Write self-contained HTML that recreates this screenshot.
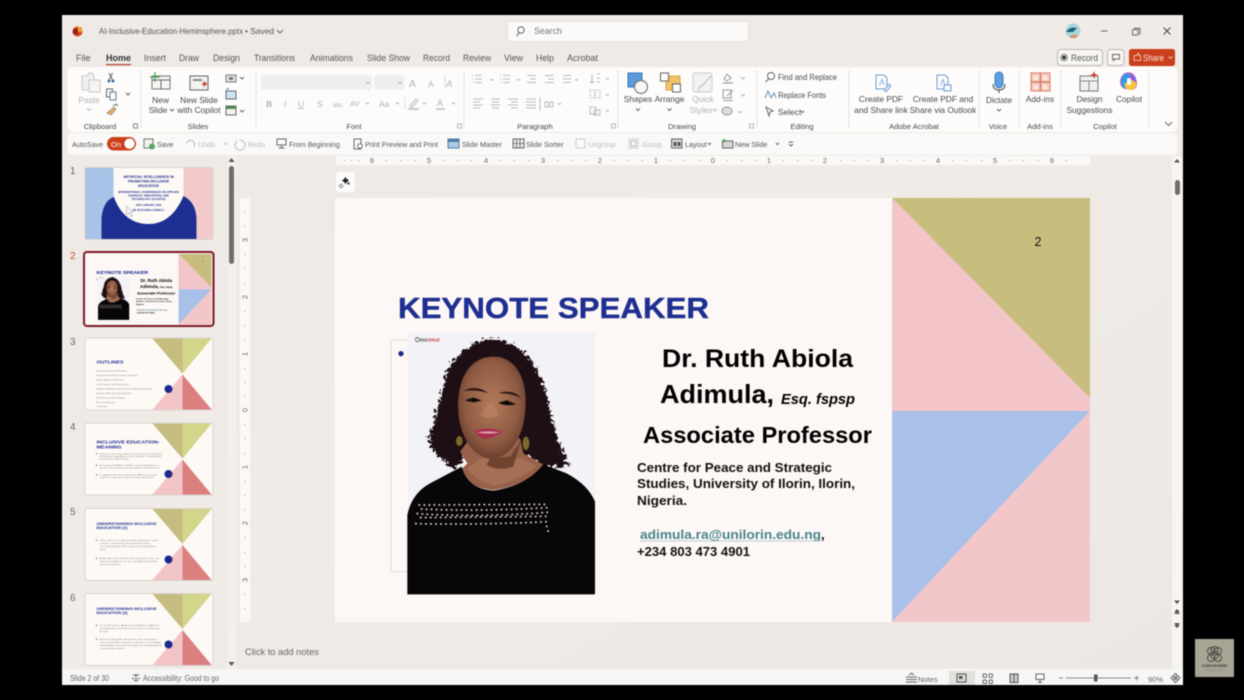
<!DOCTYPE html>
<html lang="en"><head><meta charset="utf-8"><title>PowerPoint</title>
<style>
html,body{margin:0;padding:0;background:#000;width:1244px;height:700px;overflow:hidden}
svg.page{display:block;filter:blur(.45px)}
text{font-family:"Liberation Sans",sans-serif;font-size:8.4px;fill:#4a4a4a;white-space:pre}
.c{text-anchor:middle}
.g{fill:#b3b1ae}
.t{font-size:9px;fill:#555}
.q{font-size:7.2px;fill:#555}
.ql{font-size:7.2px;fill:#bbb}
.ic{fill:none;stroke:#666;stroke-width:1}
.lic{fill:none;stroke:#bcbab7;stroke-width:1}
.sep{stroke:#e4e2df;stroke-width:1}
.b{font-weight:700;fill:#000}
.tb{fill:#777;font-size:2.2px}
</style></head><body>
<svg class="page" width="1244" height="700" viewBox="0 0 1244 700" xmlns="http://www.w3.org/2000/svg">
<defs>
<linearGradient id="bg" x1="0" x2="1" y1="0" y2="1"><stop offset="0" stop-color="#eeeae5"/><stop offset=".5" stop-color="#f1ebe7"/><stop offset="1" stop-color="#ebe8e3"/></linearGradient>
<radialGradient id="skin" cx=".5" cy=".45" r=".62"><stop offset="0" stop-color="#b27a5c"/><stop offset=".65" stop-color="#8e5a42"/><stop offset="1" stop-color="#593226"/></radialGradient>
<filter id="curl" x="-10%" y="-10%" width="120%" height="120%" color-interpolation-filters="sRGB"><feTurbulence type="turbulence" baseFrequency=".07" numOctaves="2" seed="4"/><feDisplacementMap in="SourceGraphic" scale="30" xChannelSelector="R" yChannelSelector="G"/></filter>
<g id="tri">
<rect width="127" height="71" fill="#fdf9f5"/>
<polygon points="67,0 97,0 97,35" fill="#c5bd80"/><polygon points="97,0 126,0 97,35" fill="#d3d58b"/>
<polygon points="67,71 97,71 97,36" fill="#f3c4c6"/><polygon points="97,71 126,71 97,36" fill="#dc7f7f"/>
<circle cx="83" cy="50.500" r="4" fill="#1c2a8c"/>
<rect x="-.5" y="-.5" width="128" height="72" rx="2" fill="none" stroke="#d8d4cf"/>
</g>
<g id="photo" transform="translate(380 325) scale(.33333)">
<rect x="33" y="45" width="60" height="695" fill="none" stroke="#d4d3cf" stroke-width="2"/>
<rect x="82" y="22" width="563" height="786" fill="#f3f2f6"/>
<circle cx="63" cy="86" r="8" fill="#1c2a8c"/>
<circle cx="112" cy="44" r="6" fill="none" stroke="#555" stroke-width="2.500"/>
<text x="120" y="50" textLength="24" lengthAdjust="spacingAndGlyphs" style="font-size:15px;font-weight:700;fill:#444">DIGI</text><text x="146" y="50" textLength="34" lengthAdjust="spacingAndGlyphs" style="font-size:15px;font-weight:700;fill:#c8444c">BRUE</text>
<path filter="url(#curl)" d="M140,335 C155,280 170,220 195,130 C225,70 270,38 325,35 C395,38 450,85 480,160 C505,235 510,300 540,370 L562,412 L490,425 L430,380 L260,380 L215,425 L185,400 C165,385 145,365 140,335Z" fill="#1d0f14"/>
<path d="M240,380 L262,415 L245,432 Q262,490 340,495 Q440,482 492,420 L430,385 L420,340 L270,340Z" fill="#97604a"/>
<path d="M262,430 Q290,470 345,482 Q410,470 470,425 L430,400 L300,400Z" fill="#a56f56"/>
<path d="M330,400 L390,395 L425,345 L415,375 L400,425 Q350,440 320,420Z" fill="#70432f"/>
<path d="M235,265 C228,165 268,95 340,95 C412,95 446,170 435,265 C428,340 388,398 335,402 C282,398 242,340 235,265Z" fill="url(#skin)"/>
<path d="M250,198 Q290,178 325,205 Q290,192 250,198Z M355,205 Q395,190 425,220 Q392,203 355,205Z" fill="#2a1512"/>
<path d="M255,226 Q280,212 305,227 Q280,236 255,226Z M355,234 Q380,220 408,238 Q380,245 355,234Z" fill="#17100f"/>
<circle cx="280" cy="225" r="7" fill="#0c0807"/><circle cx="380" cy="233" r="7" fill="#0c0807"/>
<path d="M300,268 Q325,290 355,272 Q350,252 335,232 Q318,240 300,268Z" fill="#bf8666" opacity=".6"/>
<path d="M283,318 Q320,302 368,320 Q330,348 300,338Z" fill="#a92f4f"/><path d="M290,322 Q325,316 360,322 Q325,330 290,322Z" fill="#e2a0b0"/>
<ellipse cx="238" cy="348" rx="10" ry="15" fill="#7c6a2a"/><ellipse cx="438" cy="355" rx="10" ry="20" fill="#7c6a2a"/>
<path d="M82,808 L82,570 Q95,505 150,475 L245,425 Q262,492 340,497 Q440,482 490,418 L560,445 Q625,480 645,530 L645,808Z" fill="#080607"/>
<g fill="none" stroke="#d6d1c6" stroke-width="6" stroke-linecap="round" stroke-dasharray="0 15">
<path d="M118,540 L500,538"/><path d="M125,552 Q300,560 505,548"/><path d="M112,566 Q300,578 505,562"/><path d="M122,578 L498,574"/><path d="M108,596 Q300,600 505,590"/><path d="M500,604 L505,620"/>
</g>
</g>
<g id="slide">
<rect x="335" y="198" width="755" height="424" fill="#fdf8f5"/>
<polygon points="892,198 1090,198 1090,398" fill="#c7bd7d"/>
<polygon points="892,198 1090,398 1090,411 892,411" fill="#f3c5c8"/>
<polygon points="892,411 1090,411 892,622" fill="#a9c0e8"/>
<polygon points="1090,411 1090,622 892,622" fill="#f3c6c9"/>
<use href="#photo"/>
<text x="398" y="318" textLength="311" lengthAdjust="spacingAndGlyphs" style="font-size:29px;font-weight:700;fill:#1e2f91;stroke:#1e2f91;stroke-width:.4">KEYNOTE SPEAKER</text>
<text class="b" x="662" y="367" textLength="191" lengthAdjust="spacingAndGlyphs" style="font-size:25px">Dr. Ruth Abiola</text>
<text class="b" x="660" y="403" textLength="114" lengthAdjust="spacingAndGlyphs" style="font-size:26px">Adimula,</text>
<text class="b" x="781" y="404" textLength="74" lengthAdjust="spacingAndGlyphs" style="font-size:14.500px;font-style:italic">Esq. fspsp</text>
<text class="b" x="643" y="443" textLength="229" lengthAdjust="spacingAndGlyphs" style="font-size:23.500px">Associate Professor</text>
<text class="b" x="637" y="472" textLength="195" lengthAdjust="spacingAndGlyphs" style="font-size:13px;fill:#111">Centre for Peace and Strategic</text>
<text class="b" x="637" y="488" textLength="218" lengthAdjust="spacingAndGlyphs" style="font-size:13px;fill:#111">Studies, University of Ilorin, Ilorin,</text>
<text class="b" x="637" y="505" textLength="50" lengthAdjust="spacingAndGlyphs" style="font-size:13px;fill:#111">Nigeria.</text>
<text x="640" y="539" textLength="181" lengthAdjust="spacingAndGlyphs" style="font-size:13px;font-weight:700;fill:#4a8490">adimula.ra@unilorin.edu.ng</text>
<text class="b" x="821" y="539" style="font-size:13px">,</text>
<line x1="640" x2="821" y1="541" y2="541" stroke="#a3c0c6" stroke-width=".7"/>
<text class="b" x="637" y="556" textLength="113" lengthAdjust="spacingAndGlyphs" style="font-size:13px;fill:#111">+234 803 473 4901</text>
<text x="1034.500" y="246" style="font-size:12.500px;fill:#111">2</text>
</g>
</defs>

<rect x="62" y="15" width="1121" height="670" fill="url(#bg)"/>

<!-- title bar -->
<circle cx="77.500" cy="31.500" r="5" fill="#d8401f"/><rect x="73" y="29" width="5" height="5" fill="#8f1f10"/><rect x="78" y="27" width="4" height="5" fill="#f2a13b"/>
<text x="99" y="34" textLength="144" lengthAdjust="spacingAndGlyphs" style="font-size:8.300px;fill:#555">AI-Inclusive-Education-Heminsphere.pptx</text>
<text x="245" y="34" textLength="29" lengthAdjust="spacingAndGlyphs" style="font-size:8.300px;fill:#555">• Saved</text>
<path d="M277,30 l3,3 l3,-3" class="ic"/>
<rect x="507.500" y="21.500" width="241" height="20" rx="3" fill="#fbfaf8" stroke="#e3e1dd"/>
<circle cx="521" cy="30" r="3.200" class="ic"/><path d="M519,33 l-2.500,3" class="ic"/>
<text x="534" y="34" style="font-size:8.800px;fill:#777">Search</text>
<circle cx="1073" cy="31" r="7.500" fill="#a9d6dc"/><path d="M1066,32 Q1070,26 1077,28 L1073,32Z" fill="#1e5f75"/><path d="M1071,35 h7 l-2,3 h-6z" fill="#e09069"/>
<path d="M1101,31 h6.500" stroke="#666" stroke-width="1"/>
<rect x="1132.500" y="29.500" width="5.500" height="5.500" rx="1" class="ic"/><path d="M1134.500,29 v-.8 h5.500 v5.500 h-1" class="ic"/>
<path d="M1163.500,27.500 l7,7 m0,-7 l-7,7" class="ic" style="stroke:#444"/>

<!-- tabs -->
<g class="tabs">
<text class="t" x="76" y="61">File</text>
<text class="t" x="106" y="61" style="font-weight:700;fill:#333" textLength="25" lengthAdjust="spacingAndGlyphs">Home</text>
<rect x="106" y="64" width="25" height="1.300" fill="#b84a32"/>
<text class="t" x="144" y="61" textLength="22" lengthAdjust="spacingAndGlyphs">Insert</text>
<text class="t" x="179" y="61" textLength="20" lengthAdjust="spacingAndGlyphs">Draw</text>
<text class="t" x="213" y="61" textLength="27" lengthAdjust="spacingAndGlyphs">Design</text>
<text class="t" x="254" y="61" textLength="41" lengthAdjust="spacingAndGlyphs">Transitions</text>
<text class="t" x="310" y="61" textLength="43" lengthAdjust="spacingAndGlyphs">Animations</text>
<text class="t" x="367" y="61" textLength="43" lengthAdjust="spacingAndGlyphs">Slide Show</text>
<text class="t" x="423" y="61" textLength="27" lengthAdjust="spacingAndGlyphs">Record</text>
<text class="t" x="463" y="61" textLength="28" lengthAdjust="spacingAndGlyphs">Review</text>
<text class="t" x="504" y="61" textLength="19" lengthAdjust="spacingAndGlyphs">View</text>
<text class="t" x="536" y="61" textLength="18" lengthAdjust="spacingAndGlyphs">Help</text>
<text class="t" x="567" y="61" textLength="31" lengthAdjust="spacingAndGlyphs">Acrobat</text>
</g>
<rect x="1057.500" y="49.500" width="45" height="16" rx="3" fill="#f7f6f3" stroke="#b9b7b3"/>
<circle cx="1064" cy="57.500" r="3.300" fill="none" stroke="#555" stroke-width=".7"/><circle cx="1064" cy="57.500" r="2" fill="#333"/>
<text x="1071" y="61" textLength="27" lengthAdjust="spacingAndGlyphs" style="font-size:9px;fill:#555">Record</text>
<rect x="1107.500" y="49.500" width="16.500" height="16" rx="3" fill="#f7f6f3" stroke="#b9b7b3"/>
<path d="M1112.500,54.500 h7 v4.500 h-4.500 l-1.500,1.500 v-1.500 h-1z" class="ic"/>
<rect x="1129" y="49" width="46" height="17" rx="2.500" fill="#ca3f1c"/>
<path d="M1134,55.500 h2.500 l2,-2.500 v2.500 h2 v5 h-6.500z" fill="none" stroke="#f6d8cc" stroke-width=".8"/>
<text x="1143" y="61" textLength="21" lengthAdjust="spacingAndGlyphs" style="font-size:9px;fill:#fbe6de">Share</text>
<path d="M1168.500,56.500 l2,2 l2,-2" fill="none" stroke="#fbe6de" stroke-width=".8"/>

<!-- ribbon -->
<rect x="67.500" y="67" width="1110" height="65" rx="5" fill="#fdfcfb"/>
<rect x="67.500" y="133" width="1110" height="22" rx="4" fill="#faf9f7"/>
<g class="sep"><line x1="141" x2="141" y1="70" y2="128"/><line x1="256" x2="256" y1="70" y2="128"/><line x1="464" x2="464" y1="70" y2="128"/><line x1="618" x2="618" y1="70" y2="128"/><line x1="757" x2="757" y1="70" y2="128"/><line x1="849" x2="849" y1="70" y2="128"/><line x1="979" x2="979" y1="70" y2="128"/><line x1="1019" x2="1019" y1="70" y2="128"/><line x1="1061" x2="1061" y1="70" y2="128"/><line x1="1149" x2="1149" y1="70" y2="128"/></g>

<!-- clipboard -->
<path d="M82,76 h5 l2,-3 h3 l2,3 v14 h-12z" fill="#f0efed" stroke="#c9c8c5"/><rect x="89" y="80" width="11" height="12" fill="#f6f5f3" stroke="#c9c8c5"/>
<text class="c g" x="89" y="103">Paste</text><path d="M87,108.500 l2,2 l2,-2" class="lic"/>
<path d="M109,73 l3.500,7 m0,-7 l-3.500,7" class="ic"/><circle cx="109" cy="81" r="1.500" fill="#3f6ea0"/><circle cx="113" cy="81" r="1.500" fill="#3f6ea0"/>
<rect x="106.500" y="89" width="6" height="8" class="ic"/><rect x="110" y="92" width="6" height="8" fill="#fdfcfb" stroke="#5a7fa6"/>
<path d="M126,93 l2,2 l2,-2" class="ic"/>
<path d="M107,113 l7,-6 l2,2 l-5,6z" fill="#e8b25d" stroke="#777" stroke-width=".6"/><path d="M113,106 l3,-2 l2,2" class="ic"/>
<text class="c" x="100" y="129" style="font-size:7.600px">Clipboard</text>
<rect x="133.500" y="124" width="4" height="4" class="lic" style="stroke:#888"/>

<!-- slides -->
<rect x="152" y="76" width="18" height="13" fill="#f6f5f3" stroke="#777"/><path d="M152,80 h18 M161,80 v9" class="ic"/><path d="M155,72 v10 M150,77 h10" stroke="#4aa04f" stroke-width="1.200"/>
<text class="c" x="160.500" y="103">New</text><text class="c" x="158" y="113">Slide</text><path d="M170,109 l2,2 l2,-2" class="ic"/>
<rect x="190" y="76" width="18" height="14" fill="#f3f2f0" stroke="#666"/><rect x="193" y="79" width="9" height="2" fill="#888"/><path d="M202,84 h5 m-2.500,-2.500 v5" stroke="#c7342a" stroke-width="1.500"/>
<text class="c" x="199" y="103">New Slide</text><text class="c" x="199" y="113">with Copilot</text>
<rect x="226" y="75" width="10" height="7" fill="#e5e4e2" stroke="#777"/><rect x="229" y="77" width="4" height="3" fill="#777"/><path d="M240,77 l2,2 l2,-2" class="ic"/>
<rect x="226" y="91" width="10" height="8" fill="#cfe0ef" stroke="#667"/><path d="M226,90 l3,-2" stroke="#3d82b8"/>
<rect x="226" y="106" width="10" height="9" fill="#f2f1ef" stroke="#666"/><rect x="226" y="106" width="10" height="3" fill="#4f8b4f"/><path d="M240,110 l2,2 l2,-2" class="ic"/>
<text class="c" x="198" y="129" style="font-size:7.600px">Slides</text>

<!-- font -->
<rect x="261" y="75" width="111" height="15" rx="3" fill="#efeeec"/><rect x="374" y="75" width="30" height="15" rx="3" fill="#efeeec"/>
<path d="M366,81.500 l2,2 l2,-2 M398,81.500 l2,2 l2,-2" class="lic"/>
<text x="409" y="87" style="font-size:10.500px;fill:#b5b3b0">A</text><text x="428" y="87" style="font-size:8.500px;fill:#b5b3b0">A</text><line x1="445" x2="445" y1="75" y2="89" stroke="#ddd"/><text x="446" y="87" style="font-size:9.500px;font-style:italic;fill:#b5b3b0">A</text>
<text class="g" x="266" y="107" style="font-weight:700;font-size:8.500px">B</text><text class="g" x="284" y="107" style="font-style:italic;font-size:8.500px">I</text><text class="g" x="298" y="107" style="text-decoration:underline;font-size:8.500px">U</text><text class="g" x="317" y="107" style="font-size:8.500px">S</text><text class="g" x="333" y="107" style="font-size:6px">abc</text><text class="g" x="350" y="106" style="font-size:7.500px">AV</text><text class="g" x="379" y="107" style="font-size:8.500px">Aa</text>
<path d="M366,102.500 l1.500,1.500 l1.500,-1.500 M396,102.500 l1.500,1.500 l1.500,-1.500 M423,102.500 l1.500,1.500 l1.500,-1.500 M452,102.500 l1.500,1.500 l1.500,-1.500" class="lic"/>
<line x1="405" x2="405" y1="97" y2="110" stroke="#ddd"/>
<path d="M410,106 l6,-7 l2,1.500 l-6,7z" class="lic"/><path d="M408,109 h11" stroke="#bbb" stroke-width="1.500"/>
<text class="g" x="437" y="106" style="font-size:9px">A</text><path d="M436,109 h9" stroke="#bbb" stroke-width="1.500"/>
<text class="c" x="354" y="129" style="font-size:7.600px">Font</text>
<rect x="457.500" y="124" width="4" height="4" class="lic"/>

<!-- paragraph -->
<g class="lic">
<path d="M472,75.500 h1 m2,0 h7 M472,79 h1 m2,0 h7 M472,82.500 h1 m2,0 h7 M490,79 l1.500,1.500 l1.500,-1.500"/>
<path d="M500,75.500 h1 m2,0 h7 M500,79 h1 m2,0 h7 M500,82.500 h1 m2,0 h7 M517,79 l1.500,1.500 l1.500,-1.500"/>
<path d="M527,75.500 h9 M530,79 h6 M527,82.500 h9 M545,75.500 h9 M548,79 h6 M545,82.500 h9"/>
<path d="M563,75.500 h8 M563,79 h8 M563,82.500 h8 M575,79 l1.500,1.500 l1.500,-1.500"/>
<path d="M473,99 h10 M473,102 h7 M473,105 h10 M473,108 h7 M491,99 h9 M492,102 h7 M491,105 h9 M492,108 h7 M508,99 h10 M511,102 h7 M508,105 h10 M511,108 h7 M526,99 h10 M526,102 h10 M526,105 h10 M526,108 h10"/>
<path d="M540,97 v14 M545,102 h3 v5 h-3z M550,102 h3 v5 h-3z M558,103 l1.500,1.500 l1.500,-1.500"/>
<path d="M592,74 v9 m-2,-2 l2,2 l2,-2 M597,74 h3 M597,78 h3 M597,82 h3 M606,78 l1.500,1.500 l1.500,-1.500"/>
<rect x="590" y="90" width="10" height="8" stroke-dasharray="1.500 1"/><path d="M595,91 v6 M606,94 l1.500,1.500 l1.500,-1.500"/>
<rect x="590" y="107" width="6" height="7"/><rect x="594" y="110" width="6" height="5"/><path d="M606,110 l1.500,1.500 l1.500,-1.500"/>
</g>
<text class="c" x="535" y="129" style="font-size:7.600px">Paragraph</text>
<rect x="611.500" y="124" width="4" height="4" class="lic"/>

<!-- drawing -->
<rect x="628" y="73" width="14" height="14" fill="#5d9bdc" stroke="#3a78b8"/><circle cx="641" cy="87" r="6.500" fill="#f7f7f6" stroke="#666"/>
<text class="c" x="638" y="102">Shapes</text><path d="M636,108.500 l2,2 l2,-2" class="ic"/>
<rect x="666" y="76" width="14" height="14" fill="#f2c265" stroke="#d7a63f"/><rect x="660.500" y="73" width="8" height="8" fill="#fcfbf9" stroke="#666"/><rect x="672.500" y="84" width="8" height="8" fill="#fcfbf9" stroke="#666"/>
<text class="c" x="669.500" y="102">Arrange</text><path d="M667.500,108.500 l2,2 l2,-2" class="ic"/>
<rect x="693" y="73" width="19" height="19" rx="2" fill="#f3f2f0" stroke="#cfcecb"/><path d="M698,91 q1,-5 5,-6 l8,-9" class="lic"/>
<text class="c g" x="703" y="102">Quick</text><text class="c g" x="701" y="113">Styles</text><path d="M713,109 l2,2 l2,-2" class="lic"/>
<path d="M724,79 l3,-5 l4,4 l-4,3z" class="ic" style="stroke:#999"/><path d="M723,83 h10" stroke="#999" stroke-width="1.200"/><path d="M741,77 l2,2 l2,-2" class="lic"/>
<rect x="723" y="90" width="8" height="8" class="ic" style="stroke:#999"/><path d="M727,96 l6,-6" class="ic" style="stroke:#999"/><path d="M723,100.500 h10" stroke="#999"/><path d="M741,94 l2,2 l2,-2" class="lic"/>
<ellipse cx="727" cy="111" rx="5" ry="4" fill="#ddd" stroke="#999"/><path d="M738,111 l2,2 l2,-2" class="lic"/>
<text class="c" x="682" y="129" style="font-size:7.600px">Drawing</text>
<rect x="749.500" y="124" width="4" height="4" class="lic"/>

<!-- editing -->
<circle cx="771" cy="76" r="3.500" class="ic"/><path d="M768.500,79 l-3,3" class="ic"/>
<text x="778" y="80" textLength="59" lengthAdjust="spacingAndGlyphs">Find and Replace</text>
<path d="M765,98 l3,-7 l3,7 M771,98 l3,-5 l2,5" fill="none" stroke="#4f81ad" stroke-width=".9"/>
<text x="778" y="98" textLength="48" lengthAdjust="spacingAndGlyphs">Replace Fonts</text>
<path d="M766,107 l7,4 l-3,1 l-1,4z" class="ic"/>
<text x="778" y="115">Select</text><path d="M801,111 l1.500,1.500 l1.500,-1.500" class="ic"/>
<text class="c" x="802" y="129" style="font-size:7.600px">Editing</text>

<!-- acrobat -->
<path d="M876,75 h8 l3,3 v11 h-11z" fill="#fbfcfe" stroke="#6d9ad3"/><path d="M879,85 q2,-1 3,-6 q1,5 3,6" fill="none" stroke="#6d9ad3" stroke-width=".7"/><path d="M884,90 l5,-6 l2,2 l-5,6z" fill="#dbe6f4" stroke="#6d9ad3" stroke-width=".8"/>
<text class="c" x="881" y="102">Create PDF</text><text class="c" x="881" y="113">and Share link</text>
<path d="M937,75 h8 l3,3 v11 h-11z" fill="#fbfcfe" stroke="#6d9ad3"/><path d="M940,85 q2,-1 3,-6 q1,5 3,6" fill="none" stroke="#6d9ad3" stroke-width=".7"/><rect x="944" y="85" width="7" height="6" fill="#f5f8fc" stroke="#6d9ad3"/>
<text class="c" x="943" y="102">Create PDF and</text><text class="c" x="943" y="113">Share via Outlook</text>
<text class="c" x="914" y="129" style="font-size:7.600px">Adobe Acrobat</text>

<!-- voice etc -->
<rect x="995" y="72" width="8" height="16" rx="4" fill="#5d9ee0" stroke="#3e7fbf"/><path d="M993,84 q0,6 6,6 q6,0 6,-6 M999,90 v3" fill="none" stroke="#444"/>
<text class="c" x="999" y="103">Dictate</text><path d="M997,109 l2,2 l2,-2" class="ic"/>
<text class="c" x="998" y="129" style="font-size:7.600px">Voice</text>
<rect x="1031" y="73" width="19" height="18" fill="#f4cfc2" stroke="#d97d62"/><path d="M1040.500,73 v18 M1031,82 h19" stroke="#d97d62" stroke-width="1.500"/><rect x="1034" y="76" width="4" height="4" fill="#fbeae4"/><rect x="1043" y="76" width="4" height="4" fill="#fbeae4"/><rect x="1034" y="85" width="4" height="4" fill="#fbeae4"/><rect x="1043" y="85" width="4" height="4" fill="#fbeae4"/>
<text class="c" x="1040" y="102">Add-ins</text>
<text class="c" x="1040" y="129" style="font-size:7.600px">Add-ins</text>
<rect x="1080" y="76" width="18" height="15" fill="#f1f0ee" stroke="#777"/><path d="M1080,81 h18 M1089,81 v10" stroke="#888"/><path d="M1094,71 l1,3 l3,1 l-3,1 l-1,3 l-1,-3 l-3,-1 l3,-1z" fill="#d5352b"/>
<text class="c" x="1089.500" y="102">Design</text><text class="c" x="1089.500" y="113">Suggestions</text>
<path d="M1125,73 q6,-2 9,2 l3,7 q1,5 -4,8 l-8,-1 q-5,-2 -5,-7 q0,-6 5,-9z" fill="#e84fb0"/><path d="M1121,82 q0,-7 5,-9 l5,1 l-4,10 l-2,5 q-4,-2 -4,-7z" fill="#2f9be6"/><path d="M1131,74 q4,0 5,5 l1,4 l-6,-2z" fill="#8d5fe0"/><path d="M1124,84 l2,5 l7,1 q3,-3 4,-7 l-5,-3z" fill="#f3c63c"/><rect x="1127" y="78" width="4" height="7" rx="2" fill="#fff"/>
<text class="c" x="1129" y="102">Copilot</text>
<text class="c" x="1105" y="129" style="font-size:7.600px">Copilot</text>
<path d="M1165,122 l3.500,3.500 l3.500,-3.500" class="ic"/>

<!-- quick access -->
<text class="q" x="72" y="147">AutoSave</text>
<rect x="107" y="137" width="29" height="13.500" rx="6.700" fill="#cc401c"/><text x="111" y="147" style="font-size:7.500px;fill:#fff">On</text><circle cx="129.500" cy="143.700" r="5.200" fill="#fff"/>
<rect x="144" y="139" width="9" height="9" fill="#f1f1ef" stroke="#6c7a70"/><circle cx="152" cy="146.500" r="3" fill="#5aa66a"/>
<text class="q" x="157" y="147">Save</text>
<path d="M186,143 l4,-3 q6,1 4,7" class="lic"/><text class="ql" x="198" y="147">Undo</text><path d="M224,143 l1.500,1.500 l1.500,-1.500" class="lic"/>
<path d="M240,140 a5,5 0 1 1 -3,1" class="lic"/><text class="ql" x="248" y="147">Redo</text>
<rect x="277" y="139" width="9" height="6" class="ic"/><path d="M281.500,145 v3 m-3,0 h6" class="ic"/><text class="q" x="289" y="147">From Beginning</text>
<rect x="354" y="139" width="7" height="10" class="ic"/><circle cx="360" cy="146" r="2.300" fill="#fff" stroke="#666"/><text class="q" x="365" y="147">Print Preview and Print</text>
<rect x="448" y="139" width="11" height="9" fill="#aecbe6" stroke="#4d7ba6"/><rect x="448" y="139" width="11" height="3" fill="#4d7ba6"/><text class="q" x="462" y="147">Slide Master</text>
<rect x="513" y="139" width="11" height="9" fill="#e9e8e6" stroke="#666"/><path d="M516.500,139 v9 M520,139 v9 M513,143.500 h11" stroke="#666" stroke-width=".8"/><text class="q" x="526" y="147">Slide Sorter</text>
<rect x="576" y="139" width="9" height="9" class="lic" stroke-dasharray="2 1"/><text class="ql" x="588" y="147">Ungroup</text>
<rect x="629" y="139" width="9" height="9" class="lic" stroke-dasharray="2 1"/><rect x="631" y="141" width="5" height="5" class="lic"/><text class="ql" x="642" y="147">Group</text>
<rect x="671.500" y="139" width="10.500" height="9" fill="#d7d6d4" stroke="#666"/><rect x="673.500" y="142" width="3" height="4" fill="#555"/><rect x="677.500" y="142" width="3" height="4" fill="#555"/><text class="q" x="685" y="147">Layout</text><path d="M708,143 l1.500,1.500 l1.500,-1.500" class="ic"/>
<rect x="722.500" y="141" width="10.500" height="7" fill="#d7d6d4" stroke="#666"/><path d="M724,138.500 v4 m-2,-2 h4" stroke="#4aa04f"/><text class="q" x="735" y="147">New Slide</text>
<path d="M776,143 l1.500,1.500 l1.500,-1.500 M789,142 h4 M789,144 l2,2 l2,-2" class="ic"/>

<!-- left pane -->
<rect x="228" y="156" width="8" height="513" fill="#f3f1ee"/>
<path d="M231.500,158 l3,4 h-6z" fill="#555"/>
<rect x="229" y="166" width="5" height="98" rx="2.500" fill="#6f6d6d"/>
<path d="M228.500,662 h6 l-3,4z" fill="#555"/>
<text x="70" y="174" style="font-size:10px;fill:#666">1</text><text x="70" y="259" style="font-size:10px;fill:#c5482c">2</text><text x="70" y="345" style="font-size:10px;fill:#666">3</text><text x="70" y="430" style="font-size:10px;fill:#666">4</text><text x="70" y="515" style="font-size:10px;fill:#666">5</text><text x="70" y="601" style="font-size:10px;fill:#666">6</text>

<!-- thumb 1 -->
<g transform="translate(85.500 168)">
<rect width="127" height="71" rx="1.500" fill="#f4c9cc"/>
<rect width="29" height="71" fill="#a9c2e8"/>
<path d="M16,71 V50 Q18,30 32,28 H98 Q110,34 111,50 V71Z" fill="#1e2f91"/>
<path d="M28,0 H98 V28 Q86,56 63,56 Q38,56 28,28Z" fill="#fdf9f5"/>
<g text-anchor="middle">
<text x="63" y="10" style="font-size:3.500px;font-weight:700;fill:#1e2f91">ARTIFICIAL INTELLIGENCE IN</text>
<text x="63" y="14.500" style="font-size:3.500px;font-weight:700;fill:#1e2f91">PROMOTING INCLUSIVE</text>
<text x="63" y="19" style="font-size:3.500px;font-weight:700;fill:#1e2f91">EDUCATION</text>
<text x="63" y="25" style="font-size:2.800px;font-weight:700;fill:#1e2f91">INTERNATIONAL CONFERENCE ON APPLIED</text>
<text x="63" y="28.500" style="font-size:2.800px;font-weight:700;fill:#1e2f91">SCIENCES, INNOVATION, AND</text>
<text x="63" y="32" style="font-size:2.800px;font-weight:700;fill:#1e2f91">TECHNOLOGY (ICASITIS)</text>
<text x="63" y="38" style="font-size:2.500px;font-weight:700;fill:#1e2f91">20TH JANUARY, 2026</text>
<text x="63" y="43" style="font-size:2.300px;font-weight:700;fill:#1e2f91">DR. RUTH ABIOLA ADIMULA</text>
</g>
<path d="M41,38 l0,9 l2.500,-2 l2,4 l1.500,-.8 l-2,-4 l3,-.5z" fill="#f5f3f1" stroke="#888" stroke-width=".4"/>
<rect x="-.5" y="-.5" width="128" height="72" rx="2" fill="none" stroke="#d8d4cf"/>
</g>

<!-- thumb 2 -->
<rect x="84" y="252" width="129.500" height="74" rx="3" fill="#fdf8f5" stroke="#7c1627" stroke-width="2"/>
<g transform="translate(86 254) scale(.1662) translate(-335 -198)"><use href="#slide"/></g>

<!-- thumb 3 -->
<g transform="translate(85.500 338.500)"><use href="#tri"/>
<text x="11" y="25" textLength="27" lengthAdjust="spacingAndGlyphs" style="font-size:4.400px;font-weight:700;fill:#1e2f91">OUTLINES</text>
<text class="tb" x="11" y="33">Meaning of Inclusive Education</text>
<text class="tb" x="11" y="37.500">Key groups targeted in inclusive education</text>
<text class="tb" x="11" y="42">What is Artificial Intelligence</text>
<text class="tb" x="11" y="46.500">Core Tutorials and Global Scopes</text>
<text class="tb" x="11" y="51">Artificial Intelligence Tools for Various Educational Needs</text>
<text class="tb" x="11" y="55.500">Benefits of AI in Inclusive Education</text>
<text class="tb" x="11" y="60">Ethical Issues and Challenges</text>
<text class="tb" x="11" y="64.500">Recommendations</text>
<text class="tb" x="11" y="68.500">Conclusion</text></g>

<!-- thumb 4 -->
<g transform="translate(85.500 423.500)"><use href="#tri"/>
<text x="11" y="20" textLength="63" lengthAdjust="spacingAndGlyphs" style="font-size:4.400px;font-weight:700;fill:#1e2f91">INCLUSIVE EDUCATION-</text><text x="11" y="25" textLength="25" lengthAdjust="spacingAndGlyphs" style="font-size:4.400px;font-weight:700;fill:#1e2f91">MEANING</text>
<text class="tb" x="14" y="31" textLength="62" lengthAdjust="spacingAndGlyphs">Inclusive education refers to the practice of teaching</text><text class="tb" x="14" y="33.500" textLength="62" lengthAdjust="spacingAndGlyphs">all learners regardless of their abilities, or disabilities</text><text class="tb" x="14" y="36" textLength="30" lengthAdjust="spacingAndGlyphs">in general education.</text>
<text class="tb" x="14" y="42.500" textLength="60" lengthAdjust="spacingAndGlyphs">According to UNESCO (2009), inclusive education is a</text><text class="tb" x="14" y="45" textLength="60" lengthAdjust="spacingAndGlyphs">process of increasing the participation of all learners</text>
<text class="tb" x="14" y="52" textLength="58" lengthAdjust="spacingAndGlyphs">It supports the diversity of all children, as more</text><text class="tb" x="14" y="54.500" textLength="55" lengthAdjust="spacingAndGlyphs">support is and can be done to make classrooms</text>
<path d="M11,30 v.5 M11,41.500 v.5 M11,51 v.5" stroke="#555" stroke-linecap="round"/></g>

<!-- thumb 5 -->
<g transform="translate(85.500 509)"><use href="#tri"/>
<text x="11" y="16" textLength="60" lengthAdjust="spacingAndGlyphs" style="font-size:3.400px;font-weight:700;fill:#1e2f91">UNDERSTANDING INCLUSIVE</text><text x="11" y="20" textLength="31" lengthAdjust="spacingAndGlyphs" style="font-size:3.400px;font-weight:700;fill:#1e2f91">EDUCATION (2)</text>
<text class="tb" x="14" y="32" textLength="58" lengthAdjust="spacingAndGlyphs">The aim is to dismantle barriers and</text><text class="tb" x="14" y="35" textLength="50" lengthAdjust="spacingAndGlyphs">create a learning environment that</text><text class="tb" x="14" y="38" textLength="56" lengthAdjust="spacingAndGlyphs">accommodates diversity and individual</text><text class="tb" x="14" y="41">needs.</text>
<text class="tb" x="14" y="50" textLength="60" lengthAdjust="spacingAndGlyphs">Built upon the belief that everyone has an</text><text class="tb" x="14" y="53" textLength="58" lengthAdjust="spacingAndGlyphs">inherent right to access quality education</text><text class="tb" x="14" y="56">without discrimination.</text>
<path d="M11,31 v.5 M11,49 v.5" stroke="#555" stroke-linecap="round"/></g>

<!-- thumb 6 -->
<g transform="translate(85.500 594)"><use href="#tri"/>
<text x="11" y="16" textLength="60" lengthAdjust="spacingAndGlyphs" style="font-size:3.400px;font-weight:700;fill:#1e2f91">UNDERSTANDING INCLUSIVE</text><text x="11" y="20" textLength="31" lengthAdjust="spacingAndGlyphs" style="font-size:3.400px;font-weight:700;fill:#1e2f91">EDUCATION (3)</text>
<text class="tb" x="14" y="32" textLength="60" lengthAdjust="spacingAndGlyphs">In recent years, Artificial Intelligence (AI) has</text><text class="tb" x="14" y="35" textLength="60" lengthAdjust="spacingAndGlyphs">emerged as a transformative tool in achieving</text><text class="tb" x="14" y="38">this goal.</text>
<text class="tb" x="14" y="46" textLength="58" lengthAdjust="spacingAndGlyphs">By leveraging AI, educators and institutions</text><text class="tb" x="14" y="49" textLength="62" lengthAdjust="spacingAndGlyphs">can personalize learning, enhance accessibility,</text><text class="tb" x="14" y="52" textLength="62" lengthAdjust="spacingAndGlyphs">and bridge educational gaps for marginalized</text><text class="tb" x="14" y="55">or special needs students.</text>
<path d="M11,31 v.5 M11,45 v.5" stroke="#555" stroke-linecap="round"/></g>

<!-- rulers -->
<rect x="336" y="156" width="754" height="9" fill="#faf9f7"/>
<g text-anchor="middle">
<text x="372" y="163" style="font-size:7.500px;fill:#666">6</text><text x="429" y="163" style="font-size:7.500px;fill:#666">5</text><text x="486" y="163" style="font-size:7.500px;fill:#666">4</text><text x="543" y="163" style="font-size:7.500px;fill:#666">3</text><text x="600" y="163" style="font-size:7.500px;fill:#666">2</text><text x="656" y="163" style="font-size:7.500px;fill:#666">1</text><text x="713" y="163" style="font-size:7.500px;fill:#666">0</text><text x="769" y="163" style="font-size:7.500px;fill:#666">1</text><text x="825" y="163" style="font-size:7.500px;fill:#666">2</text><text x="882" y="163" style="font-size:7.500px;fill:#666">3</text><text x="938" y="163" style="font-size:7.500px;fill:#666">4</text><text x="995" y="163" style="font-size:7.500px;fill:#666">5</text><text x="1052" y="163" style="font-size:7.500px;fill:#666">6</text>
</g>
<path d="M344,160.500 h1 M351,160.500 h1 M358,160.500 h1 M386,160.500 h1 M400,160.500 h1 M415,160.500 h1 M443,160.500 h1 M457,160.500 h1 M471,160.500 h1 M500,160.500 h1 M514,160.500 h1 M528,160.500 h1 M557,160.500 h1 M571,160.500 h1 M585,160.500 h1 M614,160.500 h1 M628,160.500 h1 M642,160.500 h1 M670,160.500 h1 M684,160.500 h1 M699,160.500 h1 M727,160.500 h1 M741,160.500 h1 M755,160.500 h1 M783,160.500 h1 M797,160.500 h1 M811,160.500 h1 M840,160.500 h1 M854,160.500 h1 M868,160.500 h1 M896,160.500 h1 M910,160.500 h1 M924,160.500 h1 M952,160.500 h1 M966,160.500 h1 M981,160.500 h1 M1009,160.500 h1 M1023,160.500 h1 M1038,160.500 h1 M1066,160.500 h1" stroke="#999"/>
<rect x="240" y="198" width="10" height="424" fill="#faf9f7"/>
<text transform="translate(247.500 240) rotate(-90)" class="c" style="font-size:7.500px;fill:#666">3</text><text transform="translate(247.500 297) rotate(-90)" class="c" style="font-size:7.500px;fill:#666">2</text><text transform="translate(247.500 354) rotate(-90)" class="c" style="font-size:7.500px;fill:#666">1</text><text transform="translate(247.500 410) rotate(-90)" class="c" style="font-size:7.500px;fill:#666">0</text><text transform="translate(247.500 467) rotate(-90)" class="c" style="font-size:7.500px;fill:#666">1</text><text transform="translate(247.500 523) rotate(-90)" class="c" style="font-size:7.500px;fill:#666">2</text><text transform="translate(247.500 580) rotate(-90)" class="c" style="font-size:7.500px;fill:#666">3</text>
<path d="M245,212 v1 M245,226 v1 M245,254 v1 M245,268 v1 M245,283 v1 M245,311 v1 M245,325 v1 M245,339 v1 M245,368 v1 M245,382 v1 M245,396 v1 M245,424 v1 M245,438 v1 M245,453 v1 M245,481 v1 M245,495 v1 M245,509 v1 M245,537 v1 M245,552 v1 M245,566 v1 M245,594 v1 M245,608 v1" stroke="#999"/>

<!-- AI button -->
<rect x="336" y="172" width="19" height="20" rx="3.500" fill="#fcfbfa"/>
<path d="M345.500,177 l1.500,2 l2,1.500 l-2,1.500 l-1.500,2 l-1.500,-2 l-2,-1.500 l2,-1.500z" fill="#222"/><circle cx="348.500" cy="183.500" r="1.100" fill="#222"/><path d="M341,184 l1,1 l1,1 l-1,1 l-1,1 l-1,-1 l-1,-1 l1,-1z" fill="none" stroke="#666" stroke-width=".7"/>

<!-- main slide -->
<use href="#slide"/>

<!-- right scrollbar -->
<rect x="1172" y="156" width="10" height="513" fill="#f7f5f2"/>
<path d="M1177,159 l3,3.500 h-6z" fill="#555"/>
<rect x="1175" y="180" width="5" height="15" rx="2.500" fill="#6f6d6d"/>
<path d="M1174,600.500 h6 l-3,3.500z" fill="#555"/>
<path d="M1177,609 l3,3 h-2 l2,2 h-6 l2,-2 h-2z M1177,628 l3,-3 h-2 l2,-2 h-6 l2,2 h-2z" fill="#555"/>

<!-- notes + status -->
<text x="245" y="655" style="font-size:9.300px;fill:#666">Click to add notes</text>
<rect x="62" y="669" width="1121" height="16" fill="#f7f6f4"/>
<text x="70" y="681" textLength="39" lengthAdjust="spacingAndGlyphs" style="font-size:7.800px;fill:#666">Slide 2 of 30</text>
<path d="M133,675 h6 M136,674 v6 M134,680 q2,2 4,0 M132,678 l2,1 M140,678 l-2,1" class="ic"/>
<text x="143" y="681" textLength="76" lengthAdjust="spacingAndGlyphs" style="font-size:7.800px;fill:#666">Accessibility: Good to go</text>
<path d="M906,677 h11 M906,679.500 h11 M906,682 h11 M909,675 l2.500,-2 l2.500,2" class="ic"/>
<text x="918" y="682" style="font-size:7.500px;fill:#666">Notes</text>
<rect x="949" y="671" width="26" height="14" fill="#e2e0dd"/>
<rect x="957" y="674" width="9" height="8" fill="#dcdbd9" stroke="#555"/><rect x="959" y="676" width="3.500" height="3" fill="#555"/>
<rect x="983" y="674" width="3.500" height="3.500" rx="1" class="ic"/><rect x="989" y="674" width="3.500" height="3.500" rx="1" class="ic"/><rect x="983" y="680" width="3.500" height="3.500" rx="1" class="ic"/><rect x="989" y="680" width="3.500" height="3.500" rx="1" class="ic"/>
<rect x="1010" y="674" width="8" height="8.500" fill="#ccc" stroke="#555"/><path d="M1014,674 v8" stroke="#555"/>
<rect x="1036" y="674" width="8" height="5.500" class="ic"/><path d="M1040,679.500 v3 m-2,0 h4" class="ic"/>
<path d="M1059,678 h4 M1066,678 h65 M1134,678 h5 M1136.500,675.500 v5" stroke="#888"/>
<rect x="1094" y="674.500" width="3.500" height="7" fill="#555"/>
<text x="1148" y="682" style="font-size:7.500px;fill:#666">90%</text>
<path d="M1175.500,673.500 l4.500,4.500 l-4.500,4.500 l-4.500,-4.500z" class="ic"/><rect x="1173.500" y="676" width="4" height="4" fill="#888"/>

<!-- watermark -->
<rect x="1195" y="639" width="39" height="38" fill="#a7a594"/>
<g fill="none" stroke="#4d4c44" stroke-width="1"><circle cx="1211" cy="651" r="3.500"/><circle cx="1218" cy="651" r="3.500"/><circle cx="1214.500" cy="655" r="4"/><circle cx="1211" cy="658" r="3.500"/><circle cx="1218" cy="658" r="3.500"/><circle cx="1214.500" cy="650" r="3.500"/></g>
<text class="c" x="1214.500" y="667" style="font-size:3.600px;font-weight:700;fill:#3f3e37">CUROSPHERE</text>
<text class="c" x="1214.500" y="671" style="font-size:3px;fill:#77756a">SCHOOL OF</text>
</svg>
</body></html>
